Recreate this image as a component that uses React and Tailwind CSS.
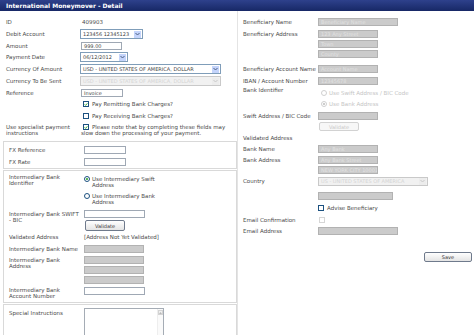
import React from 'react';

const FONT = { fontFamily: '"DejaVu Sans", Verdana, sans-serif' };

function Input({ className = '', disabled, value }) {
  return (
    <div
      className={`h-[8px] shrink-0 overflow-hidden whitespace-nowrap border px-[2px] text-[5px] leading-[6px] ${
        disabled ? 'border-[#b2b2b2] bg-[#cbcbcb] text-[#e2e2e2]' : 'border-[#9fa8b4] bg-white text-[#444]'
      } ${className}`}
    >
      {value}
    </div>
  );
}

function Select({ className = '', value, disabled }) {
  return (
    <div
      className={`flex shrink-0 items-center border ${
        disabled ? 'border-[#c9c9c9] bg-[#f1f1f1] text-[#d4d4d4]' : 'border-[#7f9db9] bg-white text-[#444]'
      } ${className}`}
    >
      <span className="flex-1 truncate px-[2px] text-[5px]">{value}</span>
      <span
        className={`mr-[1px] flex h-[7px] w-[7px] items-center justify-center ${
          disabled ? 'bg-[#ececec]' : 'bg-[#c4d4fb]'
        }`}
      >
        <svg width="5" height="4" viewBox="0 0 5 4">
          <path d="M0.5 1 L2.5 3 L4.5 1" fill="none" stroke={disabled ? '#c8c8c8' : '#4d6185'} strokeWidth="1" />
        </svg>
      </span>
    </div>
  );
}

function Checkbox({ checked, disabled, className = '' }) {
  return (
    <span
      className={`inline-flex h-[6px] w-[6px] shrink-0 items-center justify-center border ${
        disabled ? 'border-[#d6d6d6] bg-white' : 'border-[#1c5180] bg-white'
      } ${className}`}
    >
      {checked && (
        <svg width="5" height="5" viewBox="0 0 5 5">
          <path d="M0.8 2.4 L2 3.6 L4.2 1" fill="none" stroke="#21a121" strokeWidth="1.1" />
        </svg>
      )}
    </span>
  );
}

function Radio({ checked, disabled }) {
  return (
    <span
      className={`inline-flex h-[6px] w-[6px] shrink-0 items-center justify-center rounded-full border ${
        disabled ? 'border-[#d0d0d0] bg-white' : 'border-[#1c5180] bg-white'
      }`}
    >
      {checked && <span className={`h-[2px] w-[2px] rounded-full ${disabled ? 'bg-[#bdbdbd]' : 'bg-[#21a121]'}`} />}
    </span>
  );
}

function Button({ children, className = '', disabled }) {
  return (
    <div
      className={`flex shrink-0 items-center justify-center rounded-[2px] border text-[5px] ${
        disabled
          ? 'border-[#d2d2d2] bg-[#f7f7f7] text-[#c6c6c6]'
          : 'border-[#6f7a8c] bg-linear-to-b from-[#ffffff] to-[#e4e4e4] text-[#333]'
      } ${className}`}
    >
      {children}
    </div>
  );
}

function Row({ label, className = '', children, labelW = 'w-[74px]' }) {
  return (
    <div className={`flex items-center ${className}`}>
      <div className={`${labelW} shrink-0`}>{label}</div>
      {children}
    </div>
  );
}

export default function App() {
  return (
    <div className="h-[335px] w-[474px] overflow-hidden bg-white text-[5.5px] leading-[6px] text-[#4a4a4a]" style={FONT}>
      {/* title bar */}
      <div className="flex h-[11px] items-center bg-linear-to-b from-[#2e418c] to-[#172866] pl-[6px] text-[6px] font-bold text-white">
        International Moneymover - Detail
      </div>

      <div className="flex">
        {/* left column */}
        <div className="w-[238px] shrink-0 border-r border-[#e4e4e4]">
          <div className="pl-[6px] pt-[5px]">
            <Row label="ID" className="h-[12px]">
              <span className="ml-[2px]">409903</span>
            </Row>
            <Row label="Debit Account" className="h-[12px]">
              <Select className="h-[10px] w-[63px]" value="123456 12345123" />
            </Row>
            <Row label="Amount" className="h-[11px]">
              <Input className="ml-[1px] w-[41px]" value="999.00" />
            </Row>
            <Row label="Payment Date" className="h-[12px]">
              <Select className="h-[10px] w-[48px]" value="06/12/2012" />
            </Row>
            <Row label="Currency Of Amount" className="h-[12px]">
              <Select className="h-[10px] w-[141px]" value="USD - UNITED STATES OF AMERICA, DOLLAR" />
            </Row>
            <Row label="Currency To Be Sent" className="h-[12px]">
              <Select className="h-[10px] w-[141px]" value="USD - UNITED STATES OF AMERICA, DOLLAR" disabled />
            </Row>
            <Row label="Reference" className="h-[11px]">
              <Input className="ml-[1px] w-[42px]" value="Invoice" />
            </Row>
            <Row label="" className="h-[12px]">
              <Checkbox checked className="ml-[3px]" />
              <span className="ml-[3px]">Pay Remitting Bank Charges?</span>
            </Row>
            <Row label="" className="h-[11px]">
              <Checkbox className="ml-[3px]" />
              <span className="ml-[3px]">Pay Receiving Bank Charges?</span>
            </Row>
            <div className="flex h-[18px] items-start pt-[3px]">
              <div className="w-[74px] shrink-0">
                Use specialist payment
                <br />
                instructions
              </div>
              <div className="w-[152px] pl-[1px]">
                <Checkbox checked className="ml-[2px] mr-[3px] align-middle" />
                Please note that by completing these fields may slow down the processing of your payment.
              </div>
            </div>
          </div>

          {/* FX box */}
          <div className="ml-[3px] mt-[2px] w-[234px] border border-[#d9d9d9] pl-[5px] pt-[2px]">
            <Row label="FX Reference" className="h-[12px]" labelW="w-[74px]">
              <Input className="ml-[1px] w-[42px]" />
            </Row>
            <Row label="FX Rate" className="h-[12px]" labelW="w-[74px]">
              <Input className="ml-[1px] w-[42px]" />
            </Row>
          </div>

          {/* intermediary box */}
          <div className="ml-[3px] mt-[1px] w-[234px] border border-[#d9d9d9] pb-[3px] pl-[5px] pt-[3px]">
            <div className="flex items-start">
              <div className="w-[75px] shrink-0">
                Intermediary Bank
                <br />
                Identifier
              </div>
              <div className="mt-[2px] flex flex-col gap-[5px]">
                <div className="flex items-start">
                  <Radio checked />
                  <span className="ml-[2px] w-[72px]">Use Intermediary Swift Address</span>
                </div>
                <div className="flex items-start">
                  <Radio />
                  <span className="ml-[2px] w-[72px]">Use Intermediary Bank Address</span>
                </div>
              </div>
            </div>

            <div className="mt-[4px] flex items-start">
              <div className="mt-[2px] w-[75px] shrink-0">
                Intermediary Bank SWIFT
                <br />- BIC
              </div>
              <div className="mt-[1px] flex flex-col">
                <Input className="w-[61px]" />
                <Button className="ml-[1px] mt-[2px] h-[11px] w-[40px]">Validate</Button>
              </div>
            </div>

            <Row label="Validated Address" className="h-[12px]" labelW="w-[75px]">
              <span className="-mt-[1px]">[Address Not Yet Validated]</span>
            </Row>
            <Row label="Intermediary Bank Name" className="h-[12px]" labelW="w-[75px]">
              <Input disabled className="w-[60px]" />
            </Row>

            <div className="mt-[1px] flex items-start">
              <div className="mt-[1px] w-[75px] shrink-0">
                Intermediary Bank
                <br />
                Address
              </div>
              <div className="flex flex-col gap-[2px]">
                <Input disabled className="w-[60px]" />
                <Input disabled className="w-[60px]" />
                <Input disabled className="w-[60px]" />
              </div>
            </div>

            <div className="mt-[3px] flex items-start">
              <div className="w-[75px] shrink-0">
                Intermediary Bank
                <br />
                Account Number
              </div>
              <Input className="w-[61px]" />
            </div>
          </div>

          {/* special instructions */}
          <div className="ml-[3px] mt-[1px] flex h-[40px] w-[234px] items-start border border-[#d9d9d9] pl-[5px] pt-[3px]">
            <div className="mt-[2px] w-[75px] shrink-0">Special Instructions</div>
            <div className="flex h-[36px] w-[80px] justify-end border border-[#a5acb5] bg-white">
              <div className="flex h-full w-[6px] flex-col items-center border-l border-[#eeeeee] bg-[#fafafa] pt-[1px]">
                <div className="flex h-[5px] w-[5px] items-center justify-center border border-[#d4d4d4] bg-[#f0f0f0]">
                  <svg width="3" height="2" viewBox="0 0 3 2">
                    <path d="M0 2 L1.5 0 L3 2 Z" fill="#b8b8b8" />
                  </svg>
                </div>
              </div>
            </div>
          </div>
        </div>

        {/* right column */}
        <div className="flex-1 pl-[5px] pt-[5px]">
          <Row label="Beneficiary Name" className="h-[12px]" labelW="w-[75px]">
            <Input disabled className="w-[80px]" value="Beneficiary Name" />
          </Row>
          <div className="mt-[2px] flex items-start">
            <div className="mt-[1px] w-[75px] shrink-0">Beneficiary Address</div>
            <div className="flex flex-col gap-[2px]">
              <Input disabled className="w-[60px]" value="123 Any Street" />
              <Input disabled className="w-[60px]" value="Town" />
              <Input disabled className="w-[60px]" value="County" />
            </div>
          </div>
          <Row label="Beneficiary Account Name" className="mt-[5px] h-[12px]" labelW="w-[75px]">
            <Input disabled className="w-[60px]" value="Account Name" />
          </Row>
          <Row label="IBAN / Account Number" className="h-[11px]" labelW="w-[75px]">
            <Input disabled className="w-[60px]" value="12345678" />
          </Row>
          <div className="flex items-start pt-[1px]">
            <div className="w-[75px] shrink-0">Bank Identifier</div>
            <div className="ml-[3px] mt-[3px] flex flex-col gap-[5px] text-[#c4c4c4]">
              <div className="flex items-center">
                <Radio disabled />
                <span className="ml-[2px]">Use Swift Address / BIC Code</span>
              </div>
              <div className="flex items-center">
                <Radio checked disabled />
                <span className="ml-[2px]">Use Bank Address</span>
              </div>
            </div>
          </div>
          <Row label="Swift Address / BIC Code" className="mt-[3px] h-[12px]" labelW="w-[75px]">
            <Input disabled className="w-[60px]" />
          </Row>
          <Button disabled className="ml-[76px] h-[9px] w-[40px]">
            Validate
          </Button>
          <Row label="Validated Address" className="h-[13px]" labelW="w-[75px]">
            <span />
          </Row>
          <Row label="Bank Name" className="h-[10px]" labelW="w-[75px]">
            <Input disabled className="w-[60px]" value="Any Bank" />
          </Row>
          <div className="mt-[2px] flex items-start">
            <div className="mt-[1px] w-[75px] shrink-0">Bank Address</div>
            <div className="flex flex-col gap-[2px]">
              <Input disabled className="w-[60px]" value="Any Bank Street" />
              <Input disabled className="w-[60px]" value="NEW YORK CITY 10001" />
            </div>
          </div>
          <Row label="Country" className="mt-[1px] h-[12px]" labelW="w-[75px]">
            <Select disabled className="h-[9px] w-[110px]" value="US - UNITED STATES OF AMERICA" />
          </Row>
          <Input disabled className="ml-[75px] mt-[5px] w-[75px]" />
          <Row label="" className="mt-[2px] h-[12px]" labelW="w-[75px]">
            <Checkbox />
            <span className="ml-[3px]">Advise Beneficiary</span>
          </Row>
          <Row label="Email Confirmation" className="h-[12px]" labelW="w-[75px]">
            <Checkbox disabled className="ml-[1px]" />
          </Row>
          <Row label="Email Address" className="h-[10px]" labelW="w-[75px]">
            <Input disabled className="w-[80px]" />
          </Row>
          <div className="mt-[16px] flex justify-end pr-[2px]">
            <Button className="h-[10px] w-[48px]">Save</Button>
          </div>
        </div>
      </div>
    </div>
  );
}
